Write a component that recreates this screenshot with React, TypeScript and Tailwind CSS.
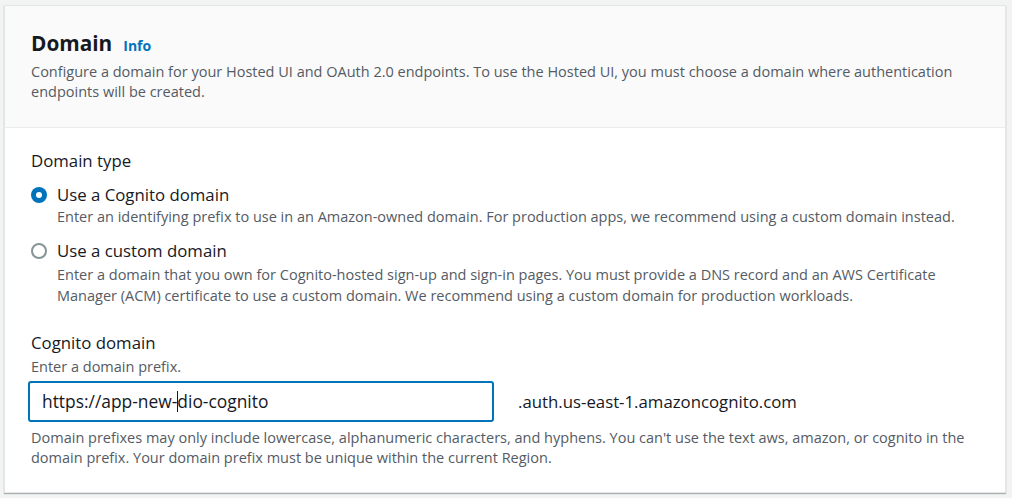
import React from "react";

const font = { fontFamily: '"Open Sans", "Noto Sans", sans-serif' };

export default function App() {
  return (
    <div className="w-[1012px] h-[498px] bg-[#f2f3f3] pt-[5px] pl-[4px] pr-[6px] overflow-hidden" style={font}>
      <div className="bg-white border border-[#e4e6e6] shadow-[0_1px_1px_0_rgba(0,28,36,0.3)] h-[488px] flex flex-col">
        <div className="bg-[#fafafa] border-b border-[#eaeded] h-[122px] px-[26px] pt-[22px]">
          <div className="flex items-baseline gap-[11px]">
            <h2 className="text-[20.8px] leading-[30px] font-bold text-[#16191f]">Domain</h2>
            <a className="text-[14px] font-bold text-[#0073bb]">Info</a>
          </div>
          <p className="text-[14.5px] leading-[20px] text-[#545b64] mt-[4px] pr-[20px]">
            Configure a domain for your Hosted UI and OAuth 2.0 endpoints. To use the Hosted UI, you must choose a domain where authentication endpoints will be created.
          </p>
        </div>
        <div className="px-[26px] pt-[22px] flex flex-col">
          <div className="text-[16.8px] leading-[22px] text-[#16191f]">Domain type</div>
          <div className="mt-[12px] flex gap-[10px]">
            <div className="pt-[3px]">
              <div className="w-[16px] h-[16px] rounded-full bg-[#0073bb] flex items-center justify-center">
                <div className="w-[6px] h-[6px] rounded-full bg-white" />
              </div>
            </div>
            <div>
              <div className="text-[16.8px] leading-[22px] text-[#16191f]">Use a Cognito domain</div>
              <div className="text-[14.5px] leading-[20px] text-[#545b64] mt-[1px]">
                Enter an identifying prefix to use in an Amazon-owned domain. For production apps, we recommend using a custom domain instead.
              </div>
            </div>
          </div>
          <div className="mt-[13px] flex gap-[10px]">
            <div className="pt-[3px]">
              <div className="w-[16px] h-[16px] rounded-full border-2 border-[#879596] bg-white" />
            </div>
            <div className="pr-[20px]">
              <div className="text-[16.8px] leading-[22px] text-[#16191f]">Use a custom domain</div>
              <div className="text-[14.5px] leading-[21px] text-[#545b64] mt-[2px]">
                Enter a domain that you own for Cognito-hosted sign-up and sign-in pages. You must provide a DNS record and an AWS Certificate Manager (ACM) certificate to use a custom domain. We recommend using a custom domain for production workloads.
              </div>
            </div>
          </div>
          <div className="mt-[26px] text-[16.8px] leading-[22px] text-[#16191f]">Cognito domain</div>
          <div className="mt-[3px] text-[14.5px] leading-[20px] text-[#545b64]">Enter a domain prefix.</div>
          <div className="mt-[4px] flex items-center">
            <div className="w-[466px] h-[41px] ml-[-3px] border-2 border-[#0073bb] rounded-[3px] flex items-center pl-[12px] text-[17.4px] text-[#16191f]">
              https://app-new-<span className="inline-block w-[1px] h-[21px] bg-[#16191f] -mx-[0.5px]" />dio-cognito
            </div>
            <div className="ml-[24px] text-[16.8px] text-[#16191f]">.auth.us-east-1.amazoncognito.com</div>
          </div>
          <p className="mt-[6px] text-[14.5px] leading-[20px] text-[#545b64]">
            Domain prefixes may only include lowercase, alphanumeric characters, and hyphens. You can't use the text aws, amazon, or cognito in the domain prefix. Your domain prefix must be unique within the current Region.
          </p>
        </div>
      </div>
    </div>
  );
}
